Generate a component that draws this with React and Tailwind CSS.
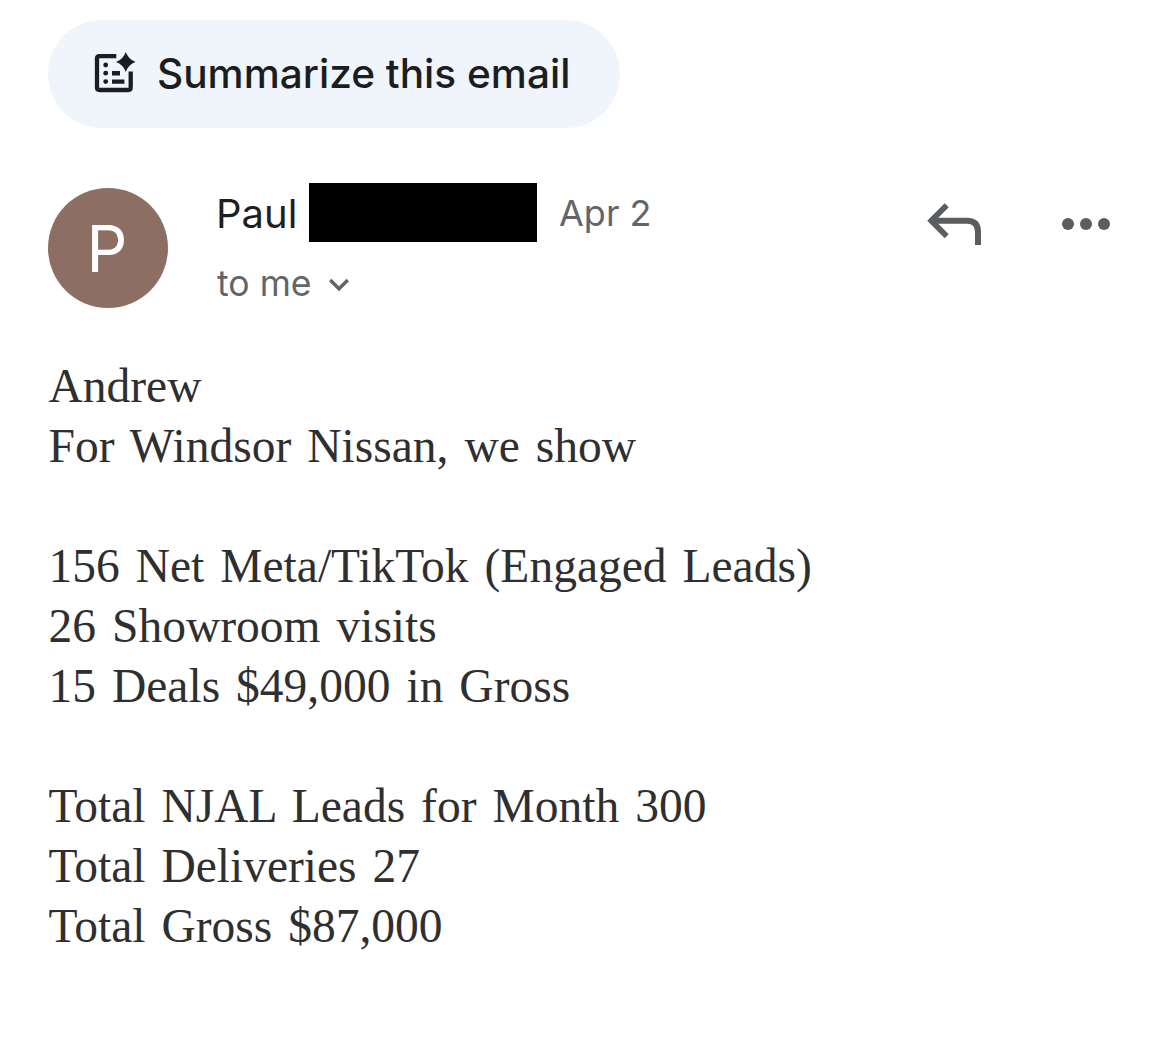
import React from 'react';

const lines = [
  'Andrew',
  'For Windsor Nissan, we show',
  '',
  '156 Net Meta/TikTok (Engaged Leads)',
  '26 Showroom visits',
  '15 Deals $49,000 in Gross',
  '',
  'Total NJAL Leads for Month 300',
  'Total Deliveries 27',
  'Total Gross $87,000',
];

function SummarizeIcon() {
  return (
    <svg width="42" height="42" viewBox="0 0 42 42" className="shrink-0 overflow-visible" fill="#1b1e20">
      <path
        d="M22.3 3.2H5.5Q3 3.2 3 5.7V34.5Q3 37 5.5 37H34.2Q36.7 37 36.7 34.5V18.4"
        fill="none"
        stroke="#1b1e20"
        strokeWidth="4.3"
      />
      <circle cx="11.7" cy="12" r="2.4" />
      <circle cx="11.7" cy="20.2" r="2.4" />
      <circle cx="11.7" cy="28.6" r="2.4" />
      <path d="M18 18h8v4.4h-8zM18 26.4h12.4v4.4H18z" />
      <path d="M31.8 -1Q34.4 6.4 41.6 9Q34.4 11.6 31.8 19Q29.2 11.6 22 9Q29.2 6.4 31.8 -1Z" />
    </svg>
  );
}

function ReplyIcon() {
  return (
    <svg width="56" height="44" viewBox="0 0 56 44" fill="none" stroke="#5b5e60" strokeWidth="6">
      <path d="M19.7 3.3L4.3 18.8L19.7 34.3" strokeWidth="5.8" />
      <path d="M5 18.8H40Q51 18.8 51 30V43" />
    </svg>
  );
}

function App() {
  return (
    <div className="min-h-[1059px] w-[1170px] bg-white px-12 pt-5 font-['Inter',sans-serif]">
      <button className="flex h-[108px] w-[572px] items-center rounded-full bg-[#f0f5fc] pl-[46px]">
        <SummarizeIcon />
        <span className="ml-[21px] whitespace-nowrap text-[40.6px] font-medium text-[#1b1e20]">
          Summarize this email
        </span>
      </button>

      <header className="mt-[55px] flex h-[130px]">
        <div className="mt-[5px] flex size-[120px] shrink-0 items-center justify-center rounded-full bg-[#8d6e63] pt-0.5 pr-0.5 text-[64px] leading-none text-white">
          P
        </div>
        <div className="ml-12 flex-1">
          <div className="flex h-[59px] items-center whitespace-nowrap">
            <span className="w-[93px] pt-0.5 text-[40px] text-[#1f1f1f]">Paul</span>
            <span className="h-[59px] w-[228px] bg-black" />
            <span className="ml-[22px] text-[36px] text-[#636567]">Apr 2</span>
          </div>
          <div className="mt-[17px] flex h-12 items-center whitespace-nowrap text-[35.6px] text-[#636567]">
            <span className="w-[113px] pt-0.5 pl-px">to me</span>
            <svg width="20" height="14" viewBox="0 0 20 14" className="mt-[3px]" fill="none" stroke="#636567" strokeWidth="3.4">
              <path d="M1.2 2L10 10.8L18.8 2" />
            </svg>
          </div>
        </div>
        <div className="mt-[19px] mr-3 flex h-11 items-start">
          <ReplyIcon />
          <div className="ml-[79px] mt-4 flex gap-1.5">
            <span className="size-3 rounded-full bg-[#5b5e60]" />
            <span className="size-3 rounded-full bg-[#5b5e60]" />
            <span className="size-3 rounded-full bg-[#5b5e60]" />
          </div>
        </div>
      </header>

      <div className="mt-[43px] pl-[0.5px] whitespace-nowrap font-['Liberation_Serif',serif] text-[47.5px] leading-[60px] text-[#2f2f2f] [word-spacing:4.1px]">
        {lines.map((line, i) => (
          <p key={i} className="h-[60px]">{line}</p>
        ))}
      </div>
    </div>
  );
}

export default App;
